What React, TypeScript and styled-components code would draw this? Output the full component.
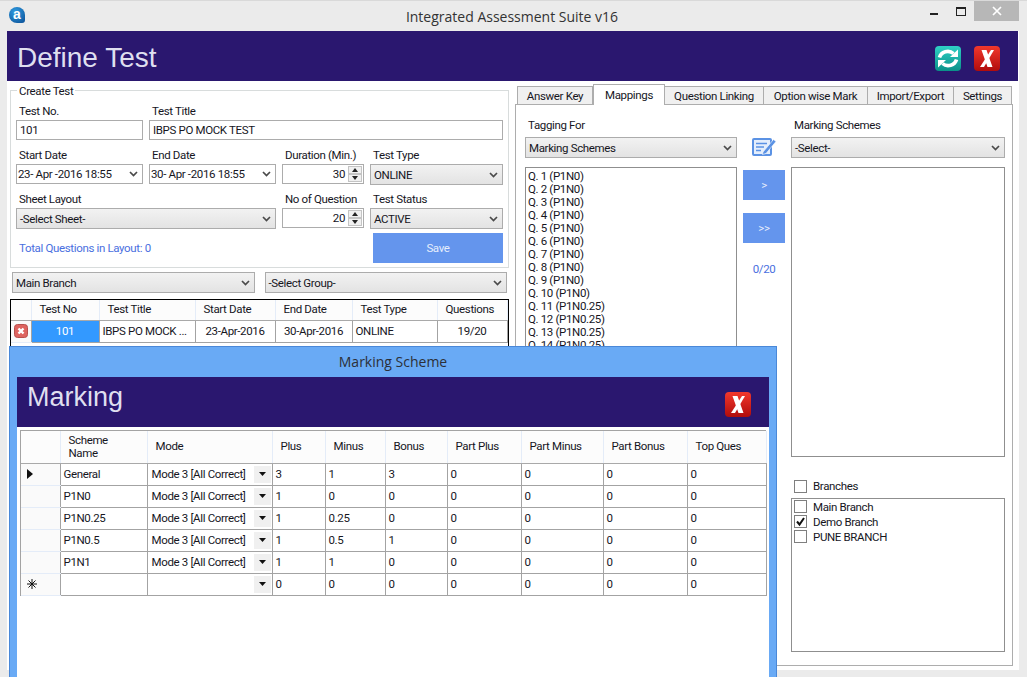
import styled, { createGlobalStyle } from 'styled-components'

const GlobalStyle = createGlobalStyle`
  html, body {
    margin: 0;
    padding: 0;
    background: #ebebeb;
  }
  * {
    box-sizing: border-box;
  }
`

const scoreColumns = [39, 87, 125, 53, 60, 62, 74, 82, 84, 79]
const testColumns = [20, 68, 96, 80, 77, 85, 70]
const questions = Array.from({ length: 20 }, (_, i) => `Q. ${i + 1} (${i < 10 ? 'P1N0' : 'P1N0.25'})`)
const schemes = [
  { name: 'General', mode: 'Mode 3 [All Correct]', values: ['3', '1', '3', '0', '0', '0', '0'], mark: 'current' },
  { name: 'P1N0', mode: 'Mode 3 [All Correct]', values: ['1', '0', '0', '0', '0', '0', '0'] },
  { name: 'P1N0.25', mode: 'Mode 3 [All Correct]', values: ['1', '0.25', '0', '0', '0', '0', '0'] },
  { name: 'P1N0.5', mode: 'Mode 3 [All Correct]', values: ['1', '0.5', '1', '0', '0', '0', '0'] },
  { name: 'P1N1', mode: 'Mode 3 [All Correct]', values: ['1', '1', '0', '0', '0', '0', '0'] },
  { name: '', mode: '', values: ['0', '0', '0', '0', '0', '0', '0'], mark: 'new' },
]

export default function App() {
  return (
    <Screen>
      <GlobalStyle />
      <TitleBar>
        <Logo>a</Logo>
        <WindowTitle>Integrated Assessment Suite v16</WindowTitle>
        <WindowControls>
          <MinimizeMark />
          <MaximizeMark />
          <CloseBlock>
            <svg width="10" height="10" viewBox="0 0 10 10">
              <path d="M1 1L9 9M9 1L1 9" stroke="#fff" strokeWidth="1.7" />
            </svg>
          </CloseBlock>
        </WindowControls>
      </TitleBar>

      <MainArea>
        <Banner>
          <BannerTitle>Define Test</BannerTitle>
          <BannerIcons>
            <RefreshIcon />
            <CloseIcon />
          </BannerIcons>
        </Banner>

        <Columns>
          <LeftColumn>
            <CreateTest />
            <BranchRow>
              <Combo>Main Branch</Combo>
              <Combo>-Select Group-</Combo>
            </BranchRow>
            <TestGrid />
          </LeftColumn>
          <RightColumn>
            <TabStrip>
              <Tab $width={76}>Answer Key</Tab>
              <Tab $width={72} $active>Mappings</Tab>
              <Tab $width={99}>Question Linking</Tab>
              <Tab $width={104}>Option wise Mark</Tab>
              <Tab $width={86}>Import/Export</Tab>
              <Tab $width={58}>Settings</Tab>
            </TabStrip>
            <MappingsPanel />
          </RightColumn>
        </Columns>
      </MainArea>

      <MarkingDialog />
    </Screen>
  )
}

const Screen = styled.div`
  position: relative;
  width: 1027px;
  height: 677px;
  overflow: hidden;
  background: #ebebeb;
  border-top: 1px solid #d9d9d9;
  font-family: Roboto, 'Liberation Sans', sans-serif;
  font-size: 11.5px;
  letter-spacing: -0.35px;
  color: #16161e;
`

const TitleBar = styled.div`
  position: relative;
  display: flex;
  align-items: center;
  justify-content: center;
  height: 30px;
  padding-right: 3px;
  letter-spacing: 0;
`

const Logo = styled.div`
  position: absolute;
  left: 9px;
  top: 6px;
  width: 16px;
  height: 16px;
  border-radius: 50% 50% 3px 50%;
  background: radial-gradient(circle at 40% 30%, #2f9be0, #0b4f96);
  color: #fff;
  font: bold 14px/14px 'Liberation Sans', sans-serif;
  text-align: center;
`

const WindowTitle = styled.div`
  font-family: 'Open Sans', sans-serif;
  font-size: 14px;
  color: #333;
`

const WindowControls = styled.div`
  position: absolute;
  right: 8px;
  top: 0;
  display: flex;
  align-items: flex-start;
`

const MinimizeMark = styled.div`
  width: 8px;
  height: 2px;
  margin-top: 12px;
  margin-right: 18px;
  background: #222;
`

const MaximizeMark = styled.div`
  width: 10px;
  height: 9px;
  margin-top: 6px;
  margin-right: 8px;
  border: 1px solid #222;
  border-top-width: 2px;
`

const CloseBlock = styled.div`
  display: flex;
  align-items: center;
  justify-content: center;
  width: 45px;
  height: 20px;
  background: #b7b7b7;
`

const MainArea = styled.div`
  width: 1012px;
  height: 639px;
  margin-left: 7px;
  background: #fff;
`

const Banner = styled.div`
  display: flex;
  align-items: center;
  justify-content: space-between;
  height: 50px;
  margin-right: 1px;
  padding: 0 18px 0 10px;
  background: #2a176f;
`

const BannerTitle = styled.div`
  margin-top: 3px;
  font-family: 'Liberation Sans', sans-serif;
  font-size: 28px;
  letter-spacing: 0;
  color: #dfdfef;
`

const BannerIcons = styled.div`
  display: flex;
  gap: 13px;
  margin-top: 4px;
`

const Columns = styled.div`
  display: flex;
`

const LeftColumn = styled.div`
  width: 508px;
  padding: 9px 0 0 3px;
`

const RightColumn = styled.div`
  width: 498px;
  padding-top: 3px;
`

const TabStrip = styled.div`
  position: relative;
  z-index: 1;
  display: flex;
  align-items: flex-end;
  height: 21px;
  margin-left: 2px;
  margin-bottom: -1px;
`

const Tab = styled.div<{ $width: number; $active?: boolean }>`
  display: flex;
  align-items: center;
  justify-content: center;
  width: ${p => p.$width}px;
  height: ${p => (p.$active ? 21 : 19)}px;
  border: 1px solid #adadad;
  border-bottom: ${p => (p.$active ? '0' : '1px solid #adadad')};
  border-left-width: ${p => (p.$active ? 1 : 0)}px;
  background: ${p => (p.$active ? '#fff' : '#f0f0f0')};
  &:first-child {
    border-left-width: 1px;
  }
`

/**
 * CREATE TEST
 */
function CreateTest() {
  return (
    <GroupBox>
      <GroupLegend>Create Test</GroupLegend>
      <FormGrid>
        <Field>
          <FieldLabel>Test No.</FieldLabel>
          <TextBox>101</TextBox>
        </Field>
        <Field $span={3}>
          <FieldLabel>Test Title</FieldLabel>
          <TextBox>IBPS PO MOCK TEST</TextBox>
        </Field>

        <Field>
          <FieldLabel>Start Date</FieldLabel>
          <DateBox>
            23- Apr -2016 18:55
            <Chevron />
          </DateBox>
        </Field>
        <Field>
          <FieldLabel>End Date</FieldLabel>
          <DateBox>
            30- Apr -2016 18:55
            <Chevron />
          </DateBox>
        </Field>
        <Field>
          <FieldLabel>Duration (Min.)</FieldLabel>
          <NumberBox value="30" />
        </Field>
        <Field>
          <FieldLabel>Test Type</FieldLabel>
          <Combo>ONLINE</Combo>
        </Field>

        <Field $span={2}>
          <FieldLabel>Sheet Layout</FieldLabel>
          <Combo>-Select Sheet-</Combo>
        </Field>
        <Field>
          <FieldLabel>No of Question</FieldLabel>
          <NumberBox value="20" />
        </Field>
        <Field>
          <FieldLabel>Test Status</FieldLabel>
          <Combo>ACTIVE</Combo>
        </Field>

        <TotalNote>Total Questions in Layout: 0</TotalNote>
        <SaveButton>Save</SaveButton>
      </FormGrid>
    </GroupBox>
  )
}

const GroupBox = styled.div`
  position: relative;
  width: 499px;
  height: 178px;
  padding: 9px 5px 0;
  border: 1px solid #d8dcdc;
`

const GroupLegend = styled.div`
  position: absolute;
  left: 6px;
  top: -7px;
  padding: 0 2px;
  line-height: 14px;
  background: #fff;
`

const FormGrid = styled.div`
  display: grid;
  grid-template-columns: 127px 127px 82px 133px;
  column-gap: 6px;
`

const Field = styled.div<{ $span?: number }>`
  grid-column: span ${p => p.$span ?? 1};
  height: 44px;
`

const FieldLabel = styled.div`
  height: 20px;
  padding: 3px 0 0 3px;
  line-height: 17px;
`

const TextBox = styled.div`
  height: 20px;
  padding: 0 3px;
  border: 1px solid #acacac;
  line-height: 18px;
  background: #fff;
`

const DateBox = styled(TextBox)`
  display: flex;
  align-items: center;
  justify-content: space-between;
  padding: 0 4px 0 1px;
  white-space: pre;
`

const TotalNote = styled.div`
  grid-column: span 3;
  padding: 9px 0 0 3px;
  color: #4a6fe0;
`

const SaveButton = styled.div`
  display: flex;
  align-items: center;
  justify-content: center;
  height: 30px;
  margin: 1px 0 0 3px;
  background: #6495ed;
  color: #e6eefc;
`

/**
 * SHARED CONTROLS
 */
function Combo({ children }: { children?: React.ReactNode }) {
  return (
    <ComboBox>
      <span>{children}</span>
      <Chevron />
    </ComboBox>
  )
}

const ComboBox = styled.div`
  display: flex;
  align-items: center;
  justify-content: space-between;
  width: 100%;
  height: 21px;
  padding: 0 4px 0 3px;
  border: 1px solid #acacac;
  background: linear-gradient(#f2f2f2, #e3e3e3);
`

function Chevron() {
  return (
    <ChevronSvg viewBox="0 0 9 6">
      <path d="M1 1L4.5 4.5L8 1" fill="none" stroke="#4a4a4a" strokeWidth="1.7" />
    </ChevronSvg>
  )
}

const ChevronSvg = styled.svg`
  flex: none;
  width: 9px;
  height: 6px;
`

function NumberBox({ value }: { value: string }) {
  return (
    <NumberWrap>
      <span>{value}</span>
      <Spinner>
        <SpinButton>
          <svg width="6" height="4" viewBox="0 0 6 4">
            <path d="M3 0L6 4H0Z" fill="#222" />
          </svg>
        </SpinButton>
        <SpinButton>
          <svg width="6" height="4" viewBox="0 0 6 4">
            <path d="M0 0H6L3 4Z" fill="#222" />
          </svg>
        </SpinButton>
      </Spinner>
    </NumberWrap>
  )
}

const NumberWrap = styled(TextBox)`
  display: flex;
  align-items: center;
  justify-content: flex-end;
  gap: 3px;
  padding: 0 1px 0 0;
`

const Spinner = styled.div`
  display: flex;
  flex-direction: column;
  width: 14px;
  height: 16px;
`

const SpinButton = styled.div`
  display: flex;
  align-items: center;
  justify-content: center;
  height: 8px;
  border: 1px solid #c4c4c4;
  background: #f0f0f0;
`

const BranchRow = styled.div`
  display: flex;
  gap: 10px;
  padding: 4px 2px 0;
  width: 499px;
`

/**
 * TEST GRID
 */
function TestGrid() {
  return (
    <TestGridFrame>
      <GridTable>
        <colgroup>
          {testColumns.map((w, i) => (
            <col key={i} width={w} />
          ))}
        </colgroup>
        <thead>
          <tr>
            <HeadCell $height={20} />
            <HeadCell $height={20}>Test No</HeadCell>
            <HeadCell $height={20}>Test Title</HeadCell>
            <HeadCell $height={20}>Start Date</HeadCell>
            <HeadCell $height={20}>End Date</HeadCell>
            <HeadCell $height={20}>Test Type</HeadCell>
            <HeadCell $height={20}>Questions</HeadCell>
          </tr>
        </thead>
        <tbody>
          <tr>
            <RowMark>
              <DeleteIcon />
            </RowMark>
            <Cell $align="center" $selected>101</Cell>
            <Cell>IBPS PO MOCK ...</Cell>
            <Cell $align="center">23-Apr-2016</Cell>
            <Cell $align="center">30-Apr-2016</Cell>
            <Cell>ONLINE</Cell>
            <Cell $align="center">19/20</Cell>
          </tr>
        </tbody>
      </GridTable>
    </TestGridFrame>
  )
}

const TestGridFrame = styled.div`
  width: 499px;
  height: 90px;
  margin-top: 6px;
  padding-right: 1px;
  border: 1px solid #000;
  border-bottom: 0;
`

const GridTable = styled.table`
  width: 100%;
  border-collapse: collapse;
  table-layout: fixed;
`

const HeadCell = styled.th<{ $height?: number }>`
  height: ${p => p.$height ?? 32}px;
  padding: 0 0 0 8px;
  border-right: 1px solid #e4ecf8;
  border-bottom: 1px solid #a9a9a9;
  background: #fcfcfc;
  font-weight: 400;
  line-height: 13px;
  text-align: left;
`

const Cell = styled.td<{ $align?: string; $selected?: boolean }>`
  height: 22px;
  padding: 0 3px;
  border: 1px solid #a3a3a3;
  background: ${p => (p.$selected ? '#3399ff' : '#fff')};
  color: ${p => (p.$selected ? '#fff' : 'inherit')};
  text-align: ${p => p.$align ?? 'left'};
  white-space: nowrap;
  overflow: hidden;
`

const RowMark = styled.td`
  height: 22px;
  padding: 0 0 0 3px;
  border-right: 1px solid #a3a3a3;
  border-bottom: 1px solid #e4ecf8;
  background: #fafafa;
  line-height: 0;
`

function DeleteIcon() {
  return (
    <svg width="14" height="14" viewBox="0 0 14 14">
      <rect x="0.5" y="0.5" width="13" height="13" rx="3" fill="#de6460" stroke="#b8504d" />
      <path d="M4.5 4.5L9.5 9.5M9.5 4.5L4.5 9.5" stroke="#fff" strokeWidth="2.4" />
    </svg>
  )
}

/**
 * MAPPINGS TAB
 */
function MappingsPanel() {
  return (
    <Panel>
      <PanelColumn $width={212}>
        <PanelLabel>Tagging For</PanelLabel>
        <Combo>Marking Schemes</Combo>
        <ListBox $height={485}>
          {questions.map(q => (
            <ListLine key={q}>{q}</ListLine>
          ))}
        </ListBox>
      </PanelColumn>

      <MiddleColumn>
        <EditIcon />
        <MoveButton>&gt;</MoveButton>
        <MoveButton>&gt;&gt;</MoveButton>
        <Counter>0/20</Counter>
      </MiddleColumn>

      <PanelColumn $width={214}>
        <PanelLabel>Marking Schemes</PanelLabel>
        <Combo>-Select-</Combo>
        <ListBox $height={290} />
        <BranchHead>
          <CheckBox />
          Branches
        </BranchHead>
        <BranchList>
          <BranchItem>
            <CheckBox />
            Main Branch
          </BranchItem>
          <BranchItem>
            <CheckBox $checked />
            Demo Branch
          </BranchItem>
          <BranchItem>
            <CheckBox />
            PUNE BRANCH
          </BranchItem>
        </BranchList>
      </PanelColumn>
    </Panel>
  )
}

const Panel = styled.div`
  display: flex;
  width: 498px;
  height: 562px;
  padding: 9px 0 0 9px;
  border: 1px solid #adadad;
`

const PanelColumn = styled.div<{ $width: number }>`
  width: ${p => p.$width}px;
`

const PanelLabel = styled.div`
  height: 23px;
  padding-left: 3px;
  line-height: 23px;
`

const ListBox = styled.div<{ $height: number }>`
  height: ${p => p.$height}px;
  margin-top: 9px;
  padding: 2px 2px;
  border: 1px solid #8f8f8f;
  overflow: hidden;
`

const ListLine = styled.div`
  line-height: 13px;
`

const MiddleColumn = styled.div`
  display: flex;
  flex-direction: column;
  align-items: center;
  width: 54px;
  padding-top: 22px;
`

const MoveButton = styled.div`
  display: flex;
  align-items: center;
  justify-content: center;
  flex: none;
  width: 42px;
  height: 30px;
  margin-top: 13px;
  background: #6495ed;
  color: #e6eefc;
`

const Counter = styled.div`
  margin-top: 19px;
  color: #4a6fe0;
`

const BranchHead = styled.div`
  display: flex;
  align-items: center;
  gap: 6px;
  height: 14px;
  margin: 22px 0 5px 3px;
`

const BranchList = styled.div`
  height: 154px;
  padding: 0 2px;
  border: 1px solid #8f8f8f;
`

const BranchItem = styled.div`
  display: flex;
  align-items: center;
  gap: 6px;
  height: 15px;
`

function CheckBox({ $checked }: { $checked?: boolean }) {
  return (
    <CheckFrame>
      {$checked && (
        <svg width="11" height="11" viewBox="0 0 11 11">
          <path d="M2 5.5L4.5 8.5L9 2" fill="none" stroke="#111" strokeWidth="2" />
        </svg>
      )}
    </CheckFrame>
  )
}

const CheckFrame = styled.span`
  display: flex;
  align-items: center;
  justify-content: center;
  flex: none;
  width: 13px;
  height: 13px;
  border: 1px solid #7f7f7f;
  background: #fff;
`

function EditIcon() {
  return (
    <svg width="25" height="21" viewBox="0 0 25 21">
      <rect x="1" y="3" width="18" height="16" rx="1" fill="#e4eefc" stroke="#5b92e4" strokeWidth="2" />
      <path d="M4 7.5H15M4 11H12M4 14.5H9" stroke="#5b92e4" strokeWidth="1.6" />
      <path d="M11 16L21.5 3.5L24 5.5L14 17.5L10.5 18.5Z" fill="#5b92e4" stroke="#fff" strokeWidth="0.6" />
    </svg>
  )
}

/**
 * BANNER ICONS
 */
function RefreshIcon() {
  return (
    <svg width="26" height="25" viewBox="0 0 26 25">
      <defs>
        <linearGradient id="teal" x1="0" y1="0" x2="0" y2="1">
          <stop offset="0" stopColor="#2fd0c6" />
          <stop offset="1" stopColor="#0a9088" />
        </linearGradient>
      </defs>
      <rect width="26" height="25" rx="4" fill="url(#teal)" />
      <path d="M4.5 11.5A8.5 8 0 0 1 18.5 7.5" fill="none" stroke="#fff" strokeWidth="3.6" />
      <path d="M15 11H23V3.5Z" fill="#fff" />
      <path d="M21.5 13.5A8.5 8 0 0 1 7.5 17.5" fill="none" stroke="#fff" strokeWidth="3.6" />
      <path d="M11 14H3V21.5Z" fill="#fff" />
    </svg>
  )
}

function CloseIcon() {
  return (
    <svg width="26" height="25" viewBox="0 0 26 25">
      <defs>
        <linearGradient id="crimson" x1="0" y1="0" x2="0" y2="1">
          <stop offset="0" stopColor="#f2382c" />
          <stop offset="1" stopColor="#b00c0c" />
        </linearGradient>
      </defs>
      <rect width="26" height="25" rx="4" fill="url(#crimson)" />
      <path d="M7.5 4H12.5L18.5 21H13.5Z" fill="#fff" />
      <path d="M17 4H20L10 21H6Z" fill="#fff" />
    </svg>
  )
}

/**
 * MARKING SCHEME DIALOG
 */
function MarkingDialog() {
  return (
    <Dialog>
      <DialogTitle>Marking Scheme</DialogTitle>
      <DialogBody>
        <DialogBanner>
          <DialogBannerTitle>Marking</DialogBannerTitle>
          <CloseIcon />
        </DialogBanner>
        <SchemeGrid>
          <GridTable>
            <colgroup>
              {scoreColumns.map((w, i) => (
                <col key={i} width={w} />
              ))}
            </colgroup>
            <thead>
              <tr>
                <HeadCell />
                <HeadCell>
                  Scheme
                  <br />
                  Name
                </HeadCell>
                <HeadCell>Mode</HeadCell>
                <HeadCell>Plus</HeadCell>
                <HeadCell>Minus</HeadCell>
                <HeadCell>Bonus</HeadCell>
                <HeadCell>Part Plus</HeadCell>
                <HeadCell>Part Minus</HeadCell>
                <HeadCell>Part Bonus</HeadCell>
                <HeadCell>Top Ques</HeadCell>
              </tr>
            </thead>
            <tbody>
              {schemes.map(s => (
                <tr key={s.name}>
                  <SchemeMark>
                    {s.mark === 'current' && (
                      <svg width="6" height="10" viewBox="0 0 6 10">
                        <path d="M0 0L6 5L0 10Z" fill="#111" />
                      </svg>
                    )}
                    {s.mark === 'new' && (
                      <svg width="10" height="10" viewBox="0 0 10 10">
                        <path d="M5 0V10M0 5H10M1.5 1.5L8.5 8.5M8.5 1.5L1.5 8.5" stroke="#111" strokeWidth="1" />
                      </svg>
                    )}
                  </SchemeMark>
                  <Cell>{s.name}</Cell>
                  <ModeCell>
                    <ModeInner>
                      <span>{s.mode}</span>
                      <ModeDrop>
                        <svg width="7" height="4" viewBox="0 0 7 4">
                          <path d="M0 0H7L3.5 4Z" fill="#111" />
                        </svg>
                      </ModeDrop>
                    </ModeInner>
                  </ModeCell>
                  {s.values.map((v, i) => (
                    <Cell key={i}>{v}</Cell>
                  ))}
                </tr>
              ))}
            </tbody>
          </GridTable>
        </SchemeGrid>
      </DialogBody>
    </Dialog>
  )
}

const Dialog = styled.div`
  position: absolute;
  left: 9px;
  top: 345px;
  display: flex;
  flex-direction: column;
  width: 768px;
  height: 345px;
  padding: 0 7px;
  border: 1px solid #4a88d8;
  background: #69aaf5;
`

const DialogTitle = styled.div`
  height: 30px;
  font-family: 'Open Sans', sans-serif;
  font-size: 14px;
  letter-spacing: 0;
  line-height: 30px;
  text-align: center;
  color: #2c3038;
`

const DialogBody = styled.div`
  flex: 1;
  background: #fff;
`

const DialogBanner = styled.div`
  display: flex;
  align-items: flex-start;
  justify-content: space-between;
  height: 50px;
  padding: 15px 18px 0 10px;
  background: #2a176f;
`

const DialogBannerTitle = styled.div`
  margin-top: -13px;
  font-family: 'Liberation Sans', sans-serif;
  font-size: 27px;
  letter-spacing: 0;
  line-height: 36px;
  color: #dfdfef;
`

const SchemeGrid = styled.div`
  width: 746px;
  margin: 3px 0 0 3px;
  border-top: 1px solid #a3a3a3;
  border-left: 1px solid #a3a3a3;
`

const SchemeMark = styled(RowMark)`
  padding: 0 0 0 6px;
`

const ModeCell = styled(Cell)`
  padding: 0 0 0 4px;
`

const ModeInner = styled.div`
  display: flex;
  align-items: center;
  justify-content: space-between;
  height: 18px;
`

const ModeDrop = styled.div`
  display: flex;
  align-items: center;
  justify-content: center;
  width: 17px;
  height: 17px;
  margin-right: 1px;
  background: #f0f0f0;
`
